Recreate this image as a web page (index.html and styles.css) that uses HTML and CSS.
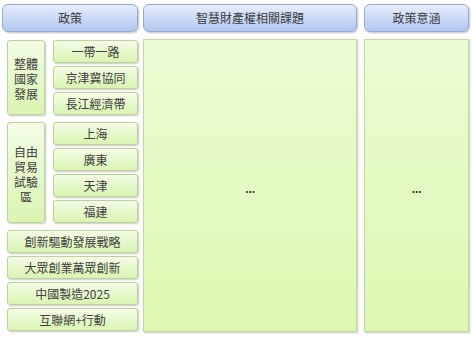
FILE: index.html
```html
<!DOCTYPE html>
<html lang="zh-Hant">
<head>
<meta charset="utf-8">
<link rel="stylesheet" href="styles.css">
</head>
<body>
<div class="page">
  <div class="col col-policy">
    <div class="head">政策</div>
    <div class="policy-body">
      <div class="group">
        <div class="box tall">整體<br>國家<br>發展</div>
        <div class="stack">
          <div class="box">一帶一路</div>
          <div class="box">京津冀協同</div>
          <div class="box">長江經濟帶</div>
        </div>
      </div>
      <div class="group">
        <div class="box tall tall2">自由<br>貿易<br>試驗<br>區</div>
        <div class="stack">
          <div class="box">上海</div>
          <div class="box">廣東</div>
          <div class="box">天津</div>
          <div class="box">福建</div>
        </div>
      </div>
      <div class="stack">
        <div class="box">創新驅動發展戰略</div>
        <div class="box">大眾創業萬眾創新</div>
        <div class="box">中國製造2025</div>
        <div class="box">互聯網+行動</div>
      </div>
    </div>
  </div>
  <div class="col col-ip">
    <div class="head">智慧財產權相關課題</div>
    <div class="panel">...</div>
  </div>
  <div class="col col-mean">
    <div class="head">政策意涵</div>
    <div class="panel">...</div>
  </div>
</div>
</body>
</html>
```
FILE: styles.css
```css
html, body {
  margin: 0;
  padding: 0;
  background: #ffffff;
}
body {
  font-family: "Noto Sans CJK TC", "Noto Sans", "Liberation Sans", sans-serif;
  font-size: 12px;
  color: #404040;
  width: 474px;
  height: 338px;
  overflow: hidden;
}
.page {
  display: flex;
  padding: 4px 0 0 2px;
  gap: 5px;
}
.col {
  display: flex;
  flex-direction: column;
  gap: 7px;
}
.col-policy { width: 136px; }
.col-ip { width: 214px; margin-right: 2px; }
.col-mean { width: 105px; }
.head {
  height: 28px;
  box-sizing: border-box;
  border: 1px solid #95aad0;
  border-radius: 6px;
  background: linear-gradient(#e6edfc, #b2c8f2);
  box-shadow: 1px 1px 2px rgba(0,0,0,0.25);
  display: flex;
  align-items: center;
  justify-content: center;
  color: #3a3a3a;
  line-height: 1;
}
.policy-body {
  padding-left: 5px;
  margin-top: 1px;
  display: flex;
  flex-direction: column;
  gap: 7px;
}
.group {
  display: flex;
  gap: 8px;
}
.stack {
  display: flex;
  flex-direction: column;
  gap: 3px;
  flex: 1;
}
.box {
  height: 23px;
  box-sizing: border-box;
  border: 1px solid #bcd29a;
  border-radius: 3px;
  background: linear-gradient(#f3fde6, #daf4b2);
  box-shadow: 1px 1px 2px rgba(0,0,0,0.22);
  display: flex;
  align-items: center;
  justify-content: center;
  line-height: 1;
  white-space: nowrap;
}
.tall {
  width: 38px;
  height: auto;
  flex: none;
  line-height: 15px;
  text-align: center;
  padding-top: 2px;
}
.tall2 {
  padding-top: 3px;
}
.panel {
  height: 293px;
  box-sizing: border-box;
  border: 1px solid #c3d8a0;
  background: linear-gradient(#ebfcd4, #dcf8b0);
  box-shadow: 1px 1px 2px rgba(0,0,0,0.22);
  display: flex;
  align-items: center;
  justify-content: center;
  color: #1a1a1a;
  font-weight: bold;
  font-size: 10px;
  padding-top: 6px;
}
```
